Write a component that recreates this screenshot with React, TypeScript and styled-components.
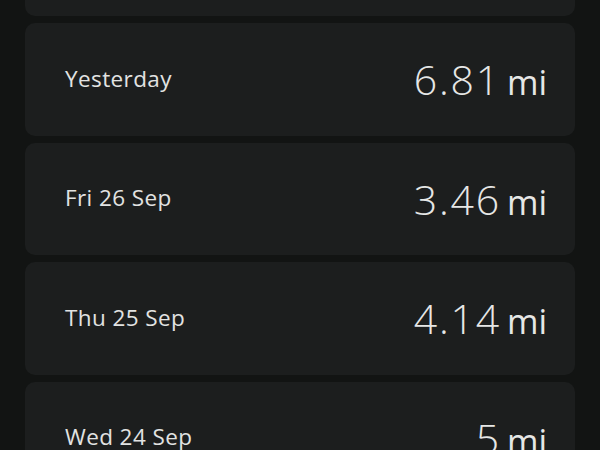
import React from "react";
import styled, { createGlobalStyle } from "styled-components";

const Global = createGlobalStyle`
  html, body {
    margin: 0;
    padding: 0;
    background: #121413;
    overflow: hidden;
  }
`;

const Screen = styled.div`
  width: 600px;
  height: 450px;
  overflow: hidden;
  background: #121413;
  font-family: "Open Sans", "Noto Sans", sans-serif;
`;

const List = styled.div`
  display: flex;
  flex-direction: column;
  gap: 7px;
  padding: 0 25px;
  margin-top: -96.5px;
`;

const Card = styled.div`
  height: 112.5px;
  box-sizing: border-box;
  background: #1c1e1e;
  border-radius: 10px;
  display: flex;
  align-items: center;
  justify-content: space-between;
  padding: 0 28px 0 40px;
`;

const Day = styled.div`
  color: #e2e3e2;
  font-size: 22.5px;
  font-weight: 500;
  letter-spacing: 0.4px;
  margin-top: -2px;
`;

const Distance = styled.div`
  display: flex;
  align-items: baseline;
  gap: 6px;
  color: #e6e7e6;
`;

const Value = styled.span`
  font-size: 41px;
  font-weight: 350;
  letter-spacing: 1.8px;
`;

const Unit = styled.span`
  font-size: 34px;
  font-weight: 400;
`;

const days = [
  { day: "Yesterday", value: "6.81" },
  { day: "Fri 26 Sep", value: "3.46" },
  { day: "Thu 25 Sep", value: "4.14" },
  { day: "Wed 24 Sep", value: "5" },
];

export default function App() {
  return (
    <Screen>
      <Global />
      <List>
        {/* today's card, scrolled mostly out of view */}
        <Card />
        {days.map((d) => (
          <Card key={d.day}>
            <Day>{d.day}</Day>
            <Distance>
              <Value>{d.value}</Value>
              <Unit>mi</Unit>
            </Distance>
          </Card>
        ))}
      </List>
    </Screen>
  );
}
